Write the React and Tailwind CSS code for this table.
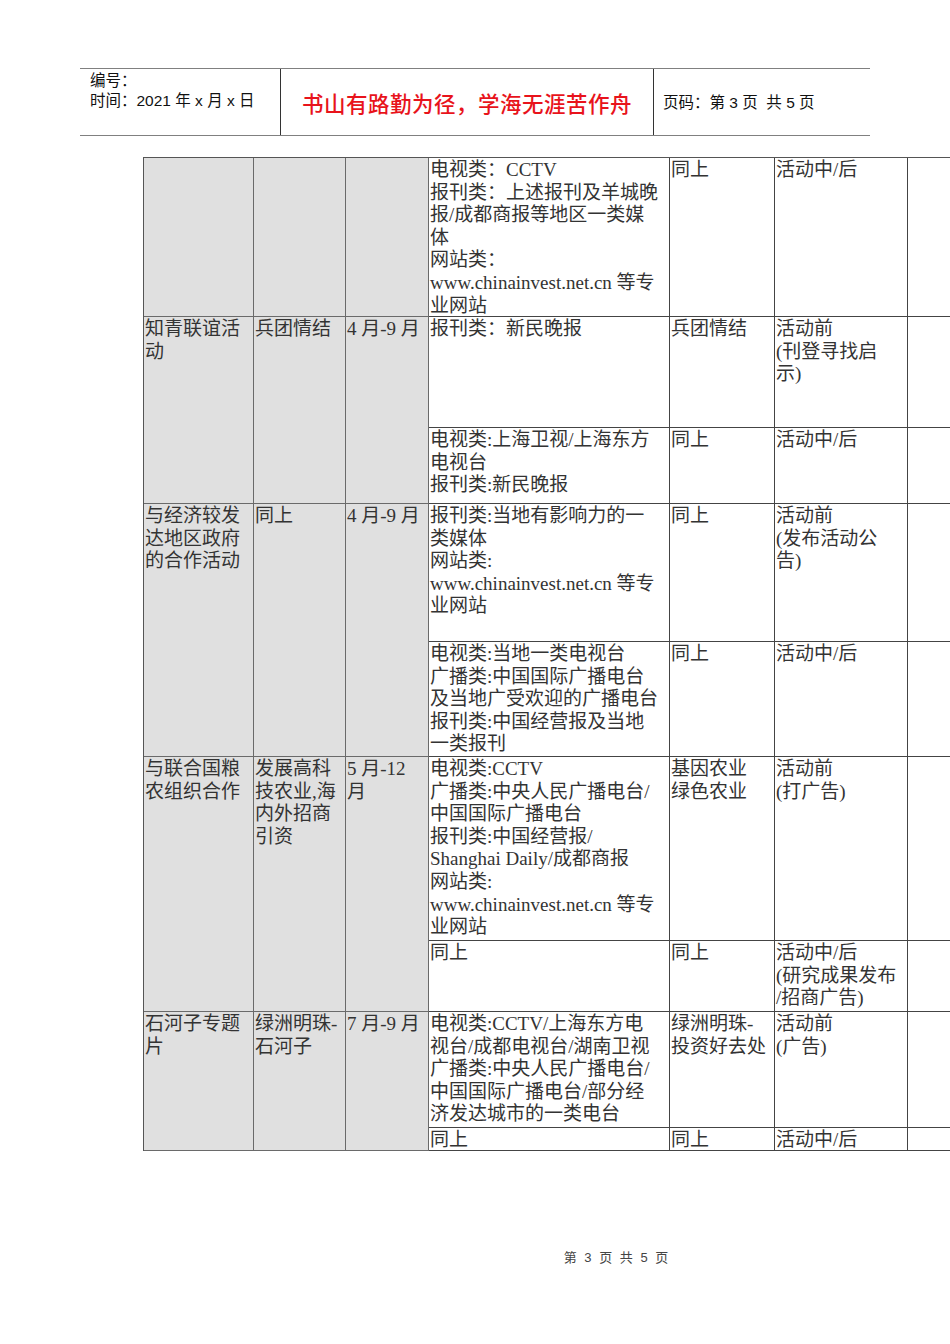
import React from 'react';

const SERIF = { fontFamily: '"Liberation Serif", "Noto Sans CJK SC", serif' };
const SANS = { fontFamily: '"Liberation Sans", "Noto Sans CJK SC", sans-serif' };

// grid placement: [col, row, rowSpan, lines, grey]
const CELLS = [
  [1, 1, 1, [], true],
  [2, 1, 1, [], true],
  [3, 1, 1, [], true],
  [4, 1, 1, ['电视类：CCTV', '报刊类：上述报刊及羊城晚', '报/成都商报等地区一类媒', '体', '网站类：', 'www.chinainvest.net.cn 等专', '业网站']],
  [5, 1, 1, ['同上']],
  [6, 1, 1, ['活动中/后']],
  [7, 1, 1, []],

  [1, 2, 2, ['知青联谊活', '动'], true],
  [2, 2, 2, ['兵团情结'], true],
  [3, 2, 2, ['4 月-9 月'], true],
  [4, 2, 1, ['报刊类：新民晚报']],
  [5, 2, 1, ['兵团情结']],
  [6, 2, 1, ['活动前', '(刊登寻找启', '示)']],
  [7, 2, 1, []],
  [4, 3, 1, ['电视类:上海卫视/上海东方', '电视台', '报刊类:新民晚报']],
  [5, 3, 1, ['同上']],
  [6, 3, 1, ['活动中/后']],
  [7, 3, 1, []],

  [1, 4, 2, ['与经济较发', '达地区政府', '的合作活动'], true],
  [2, 4, 2, ['同上'], true],
  [3, 4, 2, ['4 月-9 月'], true],
  [4, 4, 1, ['报刊类:当地有影响力的一', '类媒体', '网站类:', 'www.chinainvest.net.cn 等专', '业网站']],
  [5, 4, 1, ['同上']],
  [6, 4, 1, ['活动前', '(发布活动公', '告)']],
  [7, 4, 1, []],
  [4, 5, 1, ['电视类:当地一类电视台', '广播类:中国国际广播电台', '及当地广受欢迎的广播电台', '报刊类:中国经营报及当地', '一类报刊']],
  [5, 5, 1, ['同上']],
  [6, 5, 1, ['活动中/后']],
  [7, 5, 1, []],

  [1, 6, 2, ['与联合国粮', '农组织合作'], true],
  [2, 6, 2, ['发展高科', '技农业,海', '内外招商', '引资'], true],
  [3, 6, 2, ['5 月-12', '月'], true],
  [4, 6, 1, ['电视类:CCTV', '广播类:中央人民广播电台/', '中国国际广播电台', '报刊类:中国经营报/', 'Shanghai Daily/成都商报', '网站类:', 'www.chinainvest.net.cn 等专', '业网站']],
  [5, 6, 1, ['基因农业', '绿色农业']],
  [6, 6, 1, ['活动前', '(打广告)']],
  [7, 6, 1, []],
  [4, 7, 1, ['同上']],
  [5, 7, 1, ['同上']],
  [6, 7, 1, ['活动中/后', '(研究成果发布', '/招商广告)']],
  [7, 7, 1, []],

  [1, 8, 2, ['石河子专题', '片'], true],
  [2, 8, 2, ['绿洲明珠-', '石河子'], true],
  [3, 8, 2, ['7 月-9 月'], true],
  [4, 8, 1, ['电视类:CCTV/上海东方电', '视台/成都电视台/湖南卫视', '广播类:中央人民广播电台/', '中国国际广播电台/部分经', '济发达城市的一类电台']],
  [5, 8, 1, ['绿洲明珠-', '投资好去处']],
  [6, 8, 1, ['活动前', '(广告)']],
  [7, 8, 1, []],
  [4, 9, 1, ['同上']],
  [5, 9, 1, ['同上']],
  [6, 9, 1, ['活动中/后']],
  [7, 9, 1, []],
];

function Cell({ col, row, span, lines, grey }) {
  return (
    <div
      className={`overflow-hidden border-r border-b pl-[1px] pt-[1px] whitespace-nowrap text-[19px] leading-[22.6px] text-[#333] ${grey ? 'bg-[#e0e0e0] border-[#6a6a6a]' : 'bg-white border-[#444]'}`}
      style={{ gridColumn: col, gridRow: `${row} / span ${span}` }}
    >
      {lines.map((l, i) => <div key={i}>{l}</div>)}
    </div>
  );
}

export default function App() {
  return (
    <div className="w-[950px] h-[1344px] bg-white overflow-hidden">
      {/* running header */}
      <div className="pt-[68px] px-[80px]">
        <div className="flex h-[68px] border-t-[1.5px] border-b-[1.5px] border-[#808080]" style={SANS}>
          <div className="w-[201px] border-r border-[#333] pl-[10px] pt-[2px] text-[15.5px] leading-[20px] text-[#111]">
            <div>编号：</div>
            <div>时间：2021 年 x 月 x 日</div>
          </div>
          <div className="w-[373px] border-r border-[#333] flex items-center justify-center pt-[6px] text-[21.5px] font-medium text-[#e8131b] tracking-[0.5px]">
            书山有路勤为径，学海无涯苦作舟
          </div>
          <div className="flex-1 flex items-center pl-[9px] pt-[2px] text-[15.5px] text-[#111] whitespace-pre">
            {'页码：第 3 页  共 5 页'}
          </div>
        </div>
      </div>

      {/* plan table */}
      <div className="mt-[21px] ml-[143px]" style={SERIF}>
        <div className="grid w-[830px] border-t border-l border-[#555] grid-cols-[110px_92px_83px_241px_105px_133px_66px] grid-rows-[159px_111px_76px_138px_115px_184px_71px_116px_23px]">
          {CELLS.map(([col, row, span, lines, grey], i) => (
            <Cell key={i} col={col} row={row} span={span} lines={lines} grey={grey} />
          ))}
        </div>
      </div>

      <div className="mt-[97px] text-center text-[13px] text-[#444] tracking-[2px] pl-[284px] w-[950px]" style={SANS}>
        第 3 页 共 5 页
      </div>
    </div>
  );
}
